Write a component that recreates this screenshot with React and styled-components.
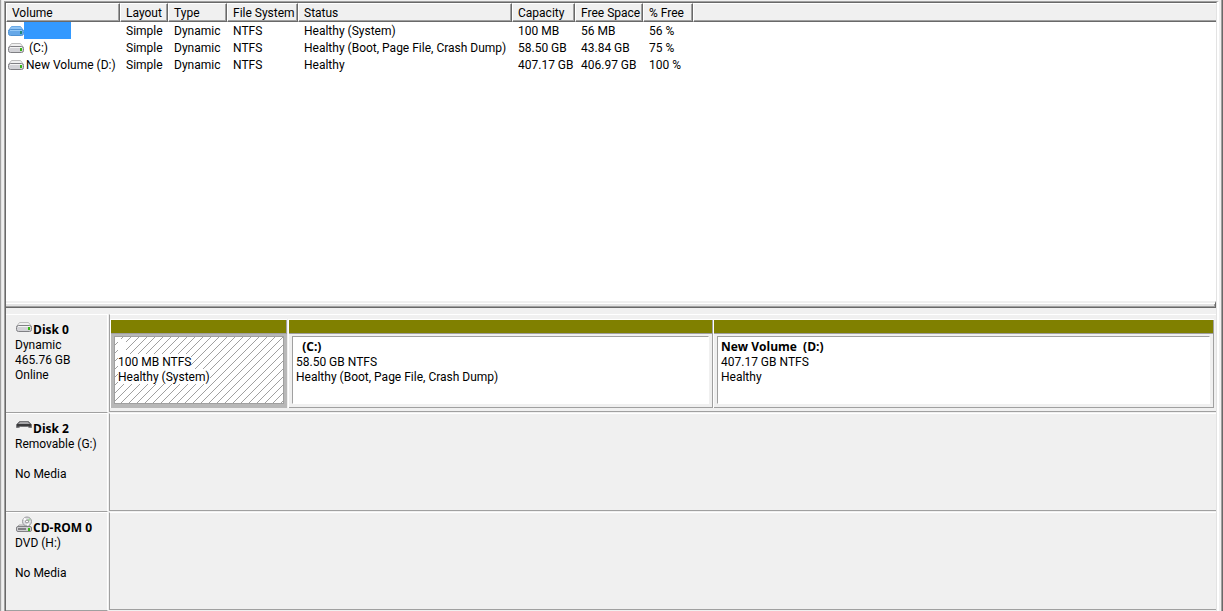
import React from "react";
import styled, { createGlobalStyle } from "styled-components";

const GlobalStyle = createGlobalStyle`
  * {
    box-sizing: border-box;
  }
  body {
    margin: 0;
    background: #f0f0f0;
    color: #000;
    font-family: "Segoe UI", Roboto, sans-serif;
    font-size: 12px;
    line-height: 15px;
  }
`
const boldFont = `"Segoe UI", "Open Sans", sans-serif`

const Window = styled.div`
  display: flex;
  min-height: 100vh;
  padding: 1px 0 0 2px;
  border-left: 1px solid #a0a0a0;
  border-right: 1px solid #696969;
  box-shadow: inset -1px 0 #a0a0a0, inset 1px 0 #e3e3e3;
`
const Frame = styled.main`
  flex: 1;
  min-width: 0;
  display: flex;
  flex-direction: column;
  margin: 0 3px 0 1px;
  border-left: 1px solid #a0a0a0;
  border-right: 2px solid #fff;
  border-top: 1px solid #a0a0a0;
`
const Inner = styled.div`
  flex: 1;
  display: flex;
  flex-direction: column;
  border-left: 1px solid #696969;
  border-right: 1px solid #e3e3e3;
  border-top: 1px solid #696969;
`
const VolumePane = styled.section`
  flex: 1;
  background: #fff;
`
const VolumeTable = styled.table`
  width: 100%;
  table-layout: fixed;
  border-collapse: separate;
  border-spacing: 0;
`
const Column = styled.col`
  width: ${(props) => props.$width};
`
const HeaderCell = styled.th`
  height: 19px;
  padding: 2px 0 0 5px;
  background: #f0f0f0;
  border-left: 1px solid #fff;
  border-top: 1px solid #fff;
  border-right: 1px solid #696969;
  border-bottom: 1px solid #696969;
  box-shadow: inset -1px -1px #a0a0a0;
  font-weight: normal;
  text-align: left;
  white-space: nowrap;
`
const HeaderFill = styled.td`
  background: #f0f0f0;
  border-left: 1px solid #fff;
  border-top: 1px solid #fff;
  border-bottom: 1px solid #696969;
  box-shadow: inset 0 -1px #a0a0a0;
`
const Cell = styled.td`
  height: 17px;
  padding: 2px 0 0 6px;
  white-space: nowrap;
`
const NameCell = styled(Cell)`
  padding: 0 0 0 2px;
`
const VolumeName = styled.div`
  display: flex;
  height: 17px;
`
const NameText = styled.span`
  padding: 2px 0 0 2px;
  white-space: pre;
`
const Selection = styled.span`
  width: 47px;
  height: 17px;
  background: #3399ff;
`
const Splitter = styled.div`
  height: 7px;
  background: #e3e3e3;
  border-top: 2px solid #f0f0f0;
  border-right: 1px solid #696969;
  border-bottom: 1px solid #696969;
  box-shadow: inset 0 1px #fff, inset -1px -1px #a0a0a0;
`
const DiskList = styled.section`
  padding-top: 6px;
`
const DiskRow = styled.article`
  display: flex;
  height: 99px;
`
const DiskLabel = styled.div`
  width: 102px;
  padding: 7px 0 0 9px;
  border-top: 1px solid #fff;
  border-right: 1px solid #fff;
  border-bottom: 1px solid #a0a0a0;
  white-space: nowrap;
`
const DiskTitle = styled.h2`
  display: flex;
  height: 15px;
  margin: 0;
  padding-left: 1px;
  font-family: ${boldFont};
  font-size: 12px;
  font-weight: bold;

  svg {
    margin-top: -4px;
    margin-right: 1px;
  }
`
const Line = styled.p`
  height: 15px;
  margin: 0;
  padding-top: 1px;
`
const DiskGraph = styled.div`
  flex: 1;
  min-width: 0;
  margin-left: 1px;
  padding: 4px 2px 3px 0;
  border-top: 1px solid #fff;
  border-left: 1px solid #a0a0a0;
  border-bottom: 1px solid #a0a0a0;
  margin-bottom: 1px;
`
const Partitions = styled.div`
  display: grid;
  grid-template-columns: 178fr 425fr 501fr;
  height: 100%;
`
const Partition = styled.div`
  display: flex;
  flex-direction: column;
  min-width: 0;
  margin-right: ${(props) => (props.$selected ? "1px" : "0")};
  border-top: 1px solid #fff;
  border-left: 1px solid #fff;
`
const PartitionBar = styled.div`
  height: 14px;
  background: #808000;
  border-right: 1px solid #a0a0a0;
  border-bottom: 1px solid #a0a0a0;
`
const hatch = `url("data:image/svg+xml,%3Csvg xmlns='http://www.w3.org/2000/svg' width='8' height='8'%3E%3Cpath d='M0 8L8 0' stroke='%23a0a0a0' shape-rendering='crispEdges'/%3E%3C/svg%3E")`

const PartitionBody = styled.div`
  flex: 1;
  display: flex;
  padding: 2px ${(props) => (props.$selected ? "2px" : "3px")} 3px 3px;
  background: ${(props) => (props.$selected ? "#b8b8b8" : "#f0f0f0")};
  border-right: 1px solid ${(props) => (props.$selected ? "#b8b8b8" : "#a0a0a0")};
  border-bottom: 1px solid ${(props) => (props.$selected ? "#b8b8b8" : "#a0a0a0")};
`
const PartitionInfo = styled.div`
  flex: 1;
  min-width: 0;
  padding: 2px 0 0 3px;
  background: #fff ${(props) => (props.$selected ? hatch : "")};
  border: 1px solid ${(props) => (props.$selected ? "#a0a0a0" : "#fff")};
  border-top-color: #a0a0a0;
  border-left-color: #a0a0a0;
  white-space: pre;
`
const InfoLine = styled.p`
  width: max-content;
  min-width: 8px;
  height: 15px;
  margin: 0;
  padding-top: 1px;
  background: #fff;
`
const InfoTitle = styled(InfoLine)`
  padding-top: 0;
  font-family: ${boldFont};
  font-weight: bold;
`

const DriveIcon = ({ selected }) => (
  <svg width="16" height="16" viewBox="0 0 16 16" aria-hidden="true">
    <path d="M3.5 4.5h9l3 4H.5z" fill={selected ? "#8fc4f5" : "#f0f0f0"} stroke={selected ? "#6aa9e6" : "#bcbcbc"} />
    <rect x="0.5" y="7.5" width="15" height="6" rx="2" fill={selected ? "#66a8e8" : "#d2d2d6"} stroke={selected ? "#4f92d4" : "#808084"} />
    <path d="M2 8.5h12" stroke={selected ? "#94c9f8" : "#f4f4f4"} />
    <rect x="12" y="9" width="2" height="3" fill={selected ? "#20887c" : "#36b516"} />
  </svg>
)

const RemovableIcon = () => (
  <svg width="16" height="16" viewBox="0 0 16 16" aria-hidden="true">
    <path d="M3.5 4.5h9l3 3v3h-2l-2-1h-7l-2 1h-2v-3z" fill="#505052" stroke="#77777a" />
    <path d="M4 5h8l2 2H2z" fill="#a5a5a8" />
    <path d="M1 8h14" stroke="#3a3a3c" strokeWidth="2" />
  </svg>
)

const CdRomIcon = () => (
  <svg width="16" height="16" viewBox="0 0 16 16" aria-hidden="true">
    <path d="M3 9h10l2.5 3H.5z" fill="#e5e5e5" stroke="#a5a5a5" />
    <circle cx="11" cy="5.5" r="4.5" fill="#dedee2" stroke="#98989c" />
    <path d="M11 5.5L8 2.5M11 5.5l1 4" stroke="#fff" strokeWidth="2" />
    <path d="M11 5.5L14 3" stroke="#a7d6a0" strokeWidth="2" />
    <circle cx="11" cy="5.5" r="1.5" fill="#fff" stroke="#88888c" />
    <rect x="0.5" y="10.5" width="15" height="5" rx="1.5" fill="#cfcfd2" stroke="#808084" />
    <path d="M2 13h8" stroke="#808084" strokeWidth="2" />
    <rect x="12" y="12" width="2" height="3" fill="#36b516" />
  </svg>
)

const columns = [
  { title: "Volume", width: "114px" },
  { title: "Layout", width: "48px" },
  { title: "Type", width: "59px" },
  { title: "File System", width: "71px" },
  { title: "Status", width: "214px" },
  { title: "Capacity", width: "63px" },
  { title: "Free Space", width: "68px" },
  { title: "% Free", width: "50px" },
]

const volumes = [
  { id: 1, name: "", selected: true, cells: ["Simple", "Dynamic", "NTFS", "Healthy (System)", "100 MB", "56 MB", "56 %"] },
  { id: 2, name: " (C:)", cells: ["Simple", "Dynamic", "NTFS", "Healthy (Boot, Page File, Crash Dump)", "58.50 GB", "43.84 GB", "75 %"] },
  { id: 3, name: "New Volume (D:)", cells: ["Simple", "Dynamic", "NTFS", "Healthy", "407.17 GB", "406.97 GB", "100 %"] },
]

const disks = [
  {
    title: "Disk 0",
    icon: <DriveIcon />,
    lines: ["Dynamic", "465.76 GB", "Online"],
    partitions: [
      { name: "", size: "100 MB NTFS", status: "Healthy (System)", selected: true },
      { name: "  (C:)", size: "58.50 GB NTFS", status: "Healthy (Boot, Page File, Crash Dump)" },
      { name: "New Volume  (D:)", size: "407.17 GB NTFS", status: "Healthy" },
    ],
  },
  { title: "Disk 2", icon: <RemovableIcon />, lines: ["Removable (G:)", "", "No Media"] },
  { title: "CD-ROM 0", icon: <CdRomIcon />, lines: ["DVD (H:)", "", "No Media"] },
]

const VolumeList = () => (
  <VolumePane>
    <VolumeTable>
      <colgroup>
        {columns.map((column) => <Column key={column.title} $width={column.width} />)}
        <Column $width="auto" />
      </colgroup>
      <thead>
        <tr>
          {columns.map((column) => <HeaderCell key={column.title} scope="col">{column.title}</HeaderCell>)}
          <HeaderFill />
        </tr>
      </thead>
      <tbody>
        {volumes.map((volume) => (
          <tr key={volume.id}>
            <NameCell>
              <VolumeName>
                <DriveIcon selected={volume.selected} />
                {volume.selected ? <Selection /> : <NameText>{volume.name}</NameText>}
              </VolumeName>
            </NameCell>
            {volume.cells.map((cell, index) => <Cell key={index}>{cell}</Cell>)}
          </tr>
        ))}
      </tbody>
    </VolumeTable>
  </VolumePane>
)

const Disk = ({ disk }) => (
  <DiskRow>
    <DiskLabel>
      <DiskTitle>{disk.icon}{disk.title}</DiskTitle>
      {disk.lines.map((line, index) => <Line key={index}>{line}</Line>)}
    </DiskLabel>
    <DiskGraph>
      {disk.partitions && (
        <Partitions>
          {disk.partitions.map((partition) => (
            <Partition key={partition.size} $selected={partition.selected}>
              <PartitionBar />
              <PartitionBody $selected={partition.selected}>
                <PartitionInfo $selected={partition.selected}>
                  <InfoTitle>{partition.name}</InfoTitle>
                  <InfoLine>{partition.size}</InfoLine>
                  <InfoLine>{partition.status}</InfoLine>
                </PartitionInfo>
              </PartitionBody>
            </Partition>
          ))}
        </Partitions>
      )}
    </DiskGraph>
  </DiskRow>
)

const App = () => (
  <>
    <GlobalStyle />
    <Window>
      <Frame>
        <Inner>
          <VolumeList />
          <Splitter />
          <DiskList>
            {disks.map((disk) => <Disk key={disk.title} disk={disk} />)}
          </DiskList>
        </Inner>
      </Frame>
    </Window>
  </>
)

export default App
